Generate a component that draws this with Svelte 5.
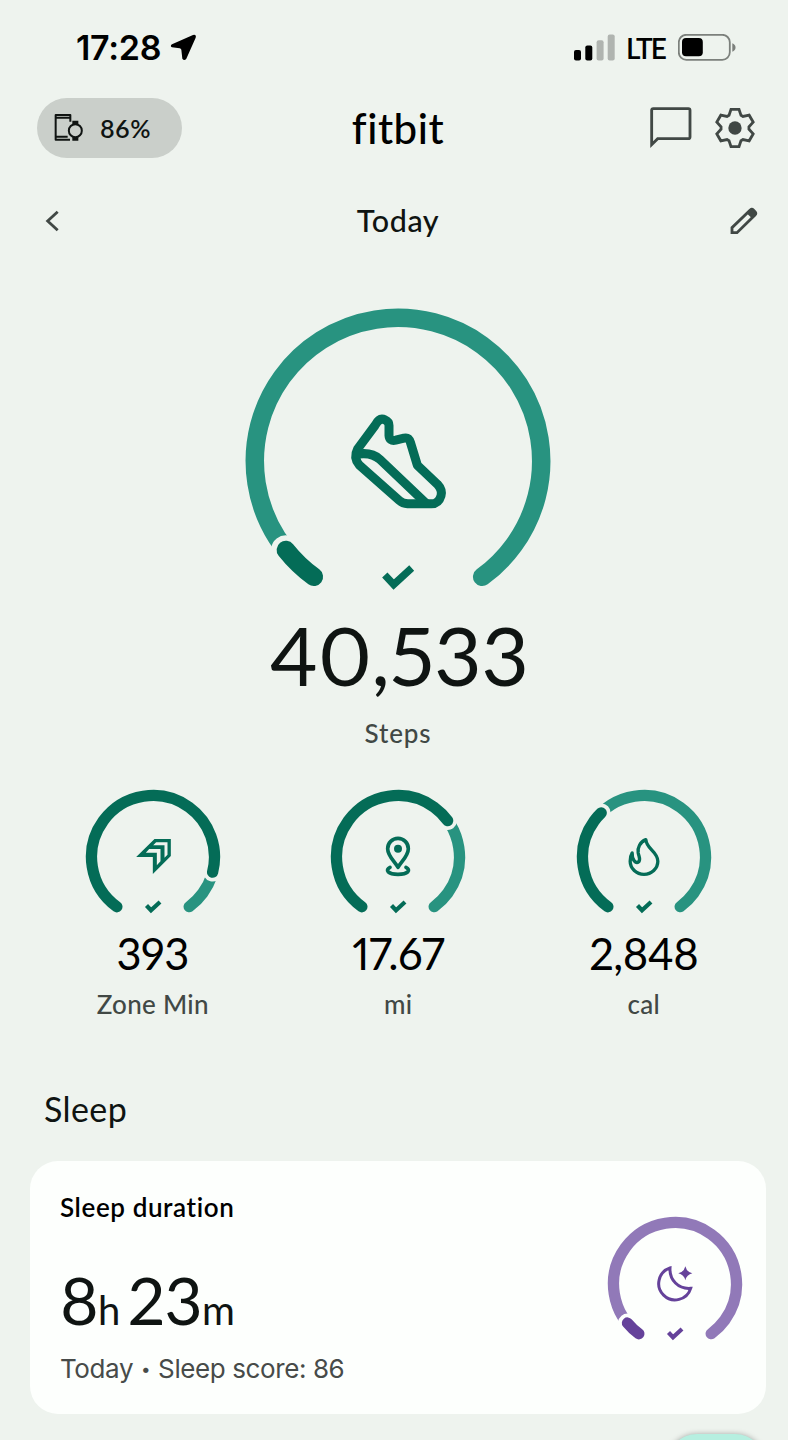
<script>
	const SWEEP = 288;

	const stats = [
		{ icon: "zone", value: "393", label: "Zone Min", progress: 0.862 },
		{ icon: "pin", value: "17.67", label: "mi", progress: 0.687 },
		{ icon: "flame", value: "2,848", label: "cal", progress: 0.347 },
	];

	// one tooth of the gear, repeated six times round the centre
	const tooth = [
		[-18, -38],
		[-12, -56],
		[12, -56],
		[18, -38],
	];
	const gear = [0, 1, 2, 3, 4, 5]
		.flatMap((i) => {
			const a = (i * Math.PI) / 3;
			return tooth.map(([x, y]) => {
				const px = x * Math.cos(a) - y * Math.sin(a);
				const py = x * Math.sin(a) + y * Math.cos(a);
				return `${px.toFixed(1)},${py.toFixed(1)}`;
			});
		})
		.join(" ");
</script>

{#snippet icon(name)}
	{#if name === "shoe"}
		<g transform="scale(0.3333) translate(-504 -514.5)" stroke-width="27">
			<path
				d="M383 478 L435 408 Q448 383 465 391 Q477 396 477 408 V438 Q478 456 497 452 L522 446 Q536 443 541 458 L562 527 L622 584 Q638 601 633 619 Q626 643 604 643 H533 Q518 642 508 633 L388 527 Q369 505 383 478 Z"
			/>
			<path d="M383 494 Q425 487 450 510 L588 641" />
		</g>
	{:else if name === "zone"}
		<g transform="scale(0.3333) translate(-67.5 -81)" stroke="none">
			<path class="solid" d="M17 81 L72 27 H121 V78 L67 132 V81 Z" />
			<path class="cut" d="M77 37 H111 V74 L102 83 V46 H68 Z" />
			<path class="cut" d="M56 57 H90 V94 L79 106 V68 H46 Z" />
		</g>
	{:else if name === "pin"}
		<g transform="scale(0.3333) translate(-264 -261)" stroke-width="11">
			<path d="M264 292 C252 272 233 257 233 236 A31 31 0 0 1 295 236 C295 257 276 272 264 292 Z" />
			<circle class="solid" cx="264" cy="236" r="12" stroke="none" />
			<path d="M240 292 C224 300 234 313 264 313 C294 313 304 300 288 292" />
		</g>
	{:else if name === "flame"}
		<g transform="scale(0.3333) translate(-250.5 -261)" stroke-width="10">
			<path
				d="M256 209 C238 216 231 234 233 248 C235 260 241 267 235 275 C226 282 214 270 215 249 C210 257 209 265 209 274 A41.500 39 0 0 0 292 274 C292 244 258 238 256 209 Z"
			/>
		</g>
	{:else if name === "moon"}
		<g transform="scale(0.3333) translate(-346 -402)" stroke-width="9" stroke-linejoin="miter">
			<path d="M331 354 A49 49 0 1 0 393 415 C356 418 329 390 331 354 Z" />
			<path
				class="solid"
				stroke="none"
				d="M377 349 Q381 366 398 370 Q381 374 377 391 Q373 374 356 370 Q373 366 377 349 Z"
			/>
		</g>
	{/if}
{/snippet}

{#snippet ring(name, progress, big)}
	{@const r = big ? 143.2 : 61.5}
	{@const w = big ? 18.5 : 11.3}
	<svg
		class="ring"
		width={big ? 306 : 136}
		height={big ? 292 : 128}
		viewBox={big ? "-153 -153 306 292" : "-68 -68 136 128"}
		fill="none"
		stroke-linecap="round"
		stroke-linejoin="round"
	>
		<g transform="rotate(126)">
			<circle class="track" {r} stroke-width={w} pathLength="360" stroke-dasharray="{SWEEP} 360" />
			<circle
				class="halo"
				{r}
				stroke-width={w + (big ? 11 : 7.5)}
				pathLength="360"
				stroke-dasharray="{SWEEP * progress} 360"
			/>
			<circle
				class="fill"
				{r}
				stroke-width={w}
				pathLength="360"
				stroke-dasharray="{SWEEP * progress} 360"
			/>
		</g>
		<g class="glyph">
			{@render icon(name)}
			<path
				d={big ? "M-13.200 114 L-4.300 123.500 L13.700 107" : "M-6.500 48.500 L-2 53.200 L7 45"}
				stroke-width={big ? 7.3 : 4.2}
				stroke-linecap="butt"
				stroke-linejoin="miter"
			/>
		</g>
	</svg>
{/snippet}

<div class="screen">
	<div class="status">
		<span class="clock">17:28</span>
		<svg class="location" width="27" height="27" viewBox="511 103 81 81">
			<path
				d="M517 134 L580 106 Q591 103 588 114 L560 177 Q554 185 548 177 L545 150 Q544 147 540 146 L517 143 Q510 139 517 134 Z"
			/>
		</svg>
		<svg class="signal" width="41" height="27" viewBox="0 0 41 27">
			<rect x="0" y="16" width="7" height="10.500" rx="2" />
			<rect x="11.300" y="11.500" width="7" height="15" rx="2" />
			<rect class="dim" x="22.600" y="6.300" width="7" height="20.200" rx="2" />
			<rect class="dim" x="33.700" y="0.500" width="7" height="26" rx="2" />
		</svg>
		<span class="network">LTE</span>
		<svg width="58" height="27" viewBox="0 0 58 27">
			<rect class="case" x="0.800" y="0.800" width="51" height="25" rx="7.500" />
			<rect x="4" y="4" width="20.800" height="18.300" rx="4" />
			<path class="nub" d="M54.300 9.300 Q57.500 10.500 57.500 13.500 Q57.500 16.500 54.300 17.700 Z" />
		</svg>
	</div>

	<header>
		<div class="device">
			<svg width="30" height="30" viewBox="162 342 90 90" fill="none" stroke="#101412" stroke-width="6">
				<path d="M211 368 V348 H167 V422 H210" stroke-linejoin="round" />
				<path d="M167 356 H211 M167 413 H203" />
				<circle cx="226" cy="395" r="19.500" />
				<path d="M217 370 H235 M217 420 H235" stroke-width="10" />
			</svg>
			<span>86%</span>
		</div>
		<h1>fitbit</h1>
		<div class="actions">
			<svg width="42" height="42" viewBox="770 322 126 126" class="line">
				<path d="M775 435 V332 Q775 327 780 327 H885 Q890 327 890 332 V412 Q890 417 885 417 H793 Z" />
			</svg>
			<svg width="42" height="42" viewBox="-63 -63 126 126" class="line">
				<polygon points={gear} />
				<circle class="dot" r="20" />
			</svg>
		</div>
	</header>

	<nav>
		<svg width="14" height="22" viewBox="135 630 42 66" class="line">
			<path d="M173 635 L143 663 L173 691" />
		</svg>
		<h2>Today</h2>
		<svg width="28" height="28" viewBox="1009 623 84 84" class="line">
			<path d="M1015 700 V685 L1069 633 Q1074 627 1079 632 L1084 637 Q1089 642 1084 647 L1030 700 Z" />
			<path class="dot" d="M1058 641 L1072 628 L1088 644 L1075 657 Z" />
		</svg>
	</nav>

	<section class="steps">
		{@render ring("shoe", 0.054, true)}
		<div class="total">40,533</div>
		<div class="label">Steps</div>
	</section>

	<section class="stats">
		{#each stats as stat}
			<div class="stat">
				{@render ring(stat.icon, stat.progress, false)}
				<div class="value">{stat.value}</div>
				<div class="label">{stat.label}</div>
			</div>
		{/each}
	</section>

	<h3>Sleep</h3>
	<article class="card">
		<div>
			<h4>Sleep duration</h4>
			<div class="duration">8<small>h</small> 23<small>m</small></div>
			<p>Today <span class="bullet">•</span> Sleep score: 86</p>
		</div>
		{@render ring("moon", 0.051, false)}
	</article>

	<div class="fab"></div>
</div>

<style>
	:global(body) {
		background: #eef3ee;
	}
	.screen {
		--bg: #eef3ee;
		--dark: #046c57;
		--light: #289380;
		position: relative;
		box-sizing: border-box;
		width: 788px;
		height: 1440px;
		overflow: hidden;
		background: var(--bg);
		color: #0f1412;
		font-family: Lato, "Open Sans", sans-serif;
		font-variant-ligatures: none;
		font-variant-numeric: proportional-nums;
	}
	svg {
		display: block;
		flex: none;
	}
	h1,
	h2,
	h3,
	h4,
	p {
		margin: 0;
		font-weight: 400;
	}
	.status {
		display: flex;
		align-items: center;
		height: 94px;
		padding: 0 52px 0 76px;
		color: #000;
	}
	.clock {
		width: 94px;
		font: 600 34px/40px Inter, sans-serif;
		letter-spacing: -0.3px;
		padding-top: 1px;
		white-space: nowrap;
	}
	.signal {
		margin-left: auto;
	}
	.dim {
		fill: #b0b4b0;
	}
	.network {
		width: 40px;
		margin: 1px 12px 0 11px;
		font-size: 28px;
		font-weight: 600;
		letter-spacing: -1.9px;
		white-space: nowrap;
	}
	.case {
		fill: none;
		stroke: #7c807c;
		stroke-width: 1.8;
	}
	.nub {
		fill: #7c807c;
	}
	header {
		display: grid;
		grid-template-columns: 1fr auto 1fr;
		align-items: center;
		height: 60px;
		margin-top: 4px;
		padding: 0 32px 0 37px;
	}
	.device {
		display: flex;
		align-items: center;
		gap: 16px;
		box-sizing: border-box;
		width: 145px;
		height: 60px;
		padding-left: 17px;
		border-radius: 30px;
		background: #cacfca;
		font-size: 25px;
		font-weight: 600;
		letter-spacing: 0.6px;
	}
	h1 {
		padding-left: 3px;
		color: #000;
		font-size: 42px;
		font-weight: 500;
		line-height: 50px;
		letter-spacing: 0.5px;
	}
	.actions {
		display: flex;
		justify-content: flex-end;
		gap: 22px;
	}
	.line {
		fill: none;
		stroke: #414845;
		stroke-width: 8.5;
	}
	.dot {
		fill: #414845;
		stroke: none;
	}
	nav {
		display: flex;
		align-items: center;
		justify-content: space-between;
		height: 60px;
		margin-top: 33px;
		padding: 0 30px 0 45px;
	}
	h2 {
		margin: 0 0 2px 7px;
		font-size: 30.5px;
		font-weight: 500;
		letter-spacing: 0.6px;
	}
	.steps {
		display: flex;
		flex-direction: column;
		align-items: center;
		margin-top: 57px;
		padding-left: 8px;
	}
	.total {
		margin-top: 5px;
		padding-left: 2px;
		font-size: 82px;
		line-height: 98px;
	}
	.label {
		color: #414845;
		font-size: 26px;
		font-weight: 500;
		line-height: 32px;
		letter-spacing: 0.3px;
	}
	.steps .label {
		margin-top: 14px;
		letter-spacing: 0.9px;
	}
	.track {
		stroke: var(--light);
	}
	.halo {
		stroke: var(--bg);
	}
	.fill,
	.glyph {
		stroke: var(--dark);
	}
	.solid {
		fill: var(--dark);
	}
	.cut {
		fill: var(--bg);
	}
	.stats {
		display: grid;
		grid-template-columns: repeat(3, 245.5px);
		margin: 40px 0 0 30px;
	}
	.stat {
		display: flex;
		flex-direction: column;
		align-items: center;
	}
	.value {
		margin-top: 11px;
		color: #000;
		font-size: 43.5px;
		line-height: 50px;
		letter-spacing: -0.5px;
	}
	.stat .label {
		margin-top: 10px;
	}
	h3 {
		margin: 69px 0 0 44px;
		font-size: 34px;
		line-height: 40px;
		letter-spacing: 0.4px;
	}
	.card {
		--bg: #fdfffd;
		--dark: #65429a;
		--light: #9179b8;
		display: flex;
		justify-content: space-between;
		box-sizing: border-box;
		height: 253px;
		margin: 32px 22px 0 30px;
		padding: 30px 23px 0 30px;
		border-radius: 28px;
		background: var(--bg);
	}
	.card .ring {
		margin-top: 25px;
	}
	h4 {
		color: #000;
		font-size: 26px;
		font-weight: 600;
		line-height: 32px;
		letter-spacing: 0.6px;
	}
	.duration {
		height: 80px;
		margin-top: 37px;
		font-size: 66px;
		line-height: 80px;
		letter-spacing: -0.7px;
		word-spacing: -8px;
	}
	.duration small {
		font-size: 40px;
	}
	p {
		margin-top: 13px;
		color: #474b49;
		font: 26px/32px Inter, sans-serif;
		letter-spacing: -0.4px;
	}
	.bullet {
		margin: 0 1px;
		font-size: 17px;
		line-height: 1;
		vertical-align: 3px;
	}
	.fab {
		position: absolute;
		left: 667px;
		top: 1434px;
		width: 98px;
		height: 96px;
		border-radius: 30px;
		background: #b6efe0;
		box-shadow: 0 1px 6px rgba(0, 0, 0, 0.4);
	}
</style>
